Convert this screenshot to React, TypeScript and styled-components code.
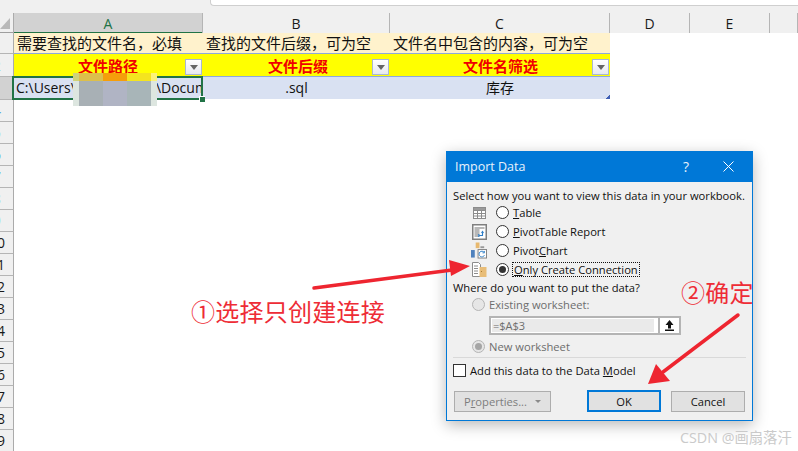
import React from "react";
import styled, { createGlobalStyle } from "styled-components";

const Global = createGlobalStyle`
  html, body { margin: 0; padding: 0; background: #fff; }
  * { box-sizing: border-box; }
`;
const CJK = `"Open Sans", "Noto Sans CJK SC", sans-serif`;
const columns = "14px 189px 187px 220px 80px 80px 28px";

const Page = styled.div`
  position: relative; width: 798px; height: 451px; overflow: hidden; background: #fff;
  font-family: ${CJK}; color: #111;
`;
const TopStrip = styled.div`height: 13px; background: #f0f0f0; padding-left: 210px;`;
const NameBox = styled.div`
  height: 6px; background: #fff; border: 1px solid #cfcfcf; border-top: 0; border-right: 0;
  border-bottom-left-radius: 4px;
`;
const HeaderRow = styled.div`
  display: grid; grid-template-columns: ${columns}; height: 20px; background: #f0f0f0;
  border-bottom: 1px solid #9e9e9e;
`;
const Corner = styled.div`
  position: relative; border-right: 1px solid #ababab;
  &::after {
    content: ""; position: absolute; left: 0; bottom: 4px; width: 0; height: 0;
    border-left: 10px solid transparent; border-bottom: 11px solid #b9b9b9;
  }
`;
const ColHead = styled.div<{ $active?: boolean }>`
  display: flex; align-items: center; justify-content: center; font-size: 14px; padding-top: 1px;
  background: ${p => (p.$active ? "#d2d2d2" : "#f0f0f0")};
  color: ${p => (p.$active ? "#217346" : "#1a1a1a")};
  border-right: 1px solid #b5b5b5;
  ${p => p.$active && "box-shadow: inset 0 -1px 0 #217346, 0 1px 0 #217346;"}
`;
const Body = styled.div`display: flex; height: 418px;`;
const Gutter = styled.div`display: flex; flex-direction: column; width: 14px; flex: none;`;
const RowHead = styled.div<{ $h: number; $active?: boolean; $pad: number; $tint?: string }>`
  height: ${p => p.$h}px; flex: none; overflow: hidden; display: flex; align-items: center;
  justify-content: flex-end; padding-right: ${p => p.$pad}px; font-size: 14px; white-space: nowrap;
  color: ${p => p.$tint || "#1a1a1a"};
  background: ${p => (p.$active ? "#d2d2d2" : "#f0f0f0")};
  border-right: 1px solid #ababab; border-bottom: 1px solid #b5b5b5;
`;
const Table = styled.div`
  display: grid; grid-template-columns: 189px 187px 220px; grid-template-rows: 21px 23px 22px;
  width: 596px; height: 66px;
`;
const NoteCell = styled.div`
  background: #fff2cc; font-size: 15px; line-height: 21px; padding-left: 3px; white-space: nowrap;
  border-bottom: 1px solid #8ea9db;
`;
const HeadCell = styled.div<{ $shift?: number }>`
  position: relative; background: #ffff00; color: #f00000; font-weight: 700; font-size: 15px;
  display: flex; align-items: center; justify-content: center;
  padding-left: ${p => p.$shift || 0}px; padding-right: 1px;
  border-bottom: 1px solid #8ea9db;
`;
const FilterBtn = styled.span`
  position: absolute; right: 1px; top: 5px; width: 17px; height: 16px;
  border: 1px solid #a9b7d1; background: linear-gradient(#fff, #e6e8ee);
  &::after {
    content: ""; position: absolute; left: 4px; top: 5px; width: 0; height: 0;
    border-left: 4px solid transparent; border-right: 4px solid transparent; border-top: 5px solid #666;
  }
`;
const DataCell = styled.div<{ $selected?: boolean; $resize?: boolean }>`
  position: relative; background: #d9e1f2; font-size: 14px; line-height: 22px; text-align: center;
  white-space: nowrap;
  ${p => p.$resize && `
    &::after { content: ""; position: absolute; right: 0; bottom: 0; width: 4px; height: 4px;
      background: linear-gradient(135deg, transparent 50%, #3f5fb5 50%); }
  `}
`;
const SelectedBox = styled.div`
  position: absolute; inset: -1px 0 -1px -2px; border: 2px solid #217346; overflow: hidden;
  text-align: left; padding-left: 2px; line-height: 20px; background: #d9e1f2;
`;
const FillHandle = styled.span`
  position: absolute; right: -2px; bottom: -3px; width: 6px; height: 6px; background: #217346;
  border: 1px solid #fff; border-right: 0; border-bottom: 0; z-index: 2;
`;
const Hidden = styled.span`display: inline-block; width: 80px;`;
const Mosaic = styled.div`
  position: absolute; left: 73px; top: 73px; width: 84px; height: 33px; display: grid;
  grid-template-columns: 6px 24px 24px 24px 6px; grid-template-rows: 8px 25px;
`;
const Tile = styled.div<{ $c: string }>`background: ${p => p.$c};`;

const Dialog = styled.div`
  position: absolute; left: 446px; top: 151px; width: 307px; height: 270px; background: #f0f0f0;
  border: 1px solid #0078d7; box-shadow: 0 4px 14px rgba(0,0,0,.28); display: flex; flex-direction: column;
  font-size: 11.2px; color: #111;
`;
const TitleBar = styled.div`
  height: 30px; flex: none; background: #0078d7; color: #e8f2fb; display: flex; align-items: center;
  padding: 0 18px 2px 8px; font-size: 12.5px;
`;
const Title = styled.span`flex: 1;`;
const Help = styled.span`margin-right: 34px; font-size: 14px;`;
const DlgBody = styled.div`display: flex; flex-direction: column; padding: 5px 6px 0 6px; flex: 1;`;
const Line = styled.div<{ $h?: number; $muted?: boolean; $indent?: number }>`
  height: ${p => p.$h || 19}px; display: flex; align-items: center; white-space: nowrap;
  padding-left: ${p => p.$indent || 0}px; color: ${p => (p.$muted ? "#6d6d6d" : "#111")};
`;
const IconSlot = styled.span`width: 16px; margin-left: 18px; margin-right: 9px; display: flex; justify-content: center; flex: none;`;
const Radio = styled.span<{ $on?: boolean; $muted?: boolean }>`
  width: 13px; height: 13px; border-radius: 50%; flex: none; position: relative; background: ${p => (p.$muted ? "#e6e6e6" : "#fff")};
  border: 1px solid ${p => (p.$muted ? "#b5b5b5" : "#333")};
  margin-right: 4px;
  ${p => p.$on && `&::after { content: ""; position: absolute; inset: 2px; border-radius: 50%; background: ${p.$muted ? "#a5a5a5" : "#333"}; }`}
`;
const Focus = styled.span`outline: 1px dotted #111; padding: 0 1px; line-height: 13px;`;
const Key = styled.span`text-decoration: underline; text-underline-offset: 1px;`;
const RefField = styled.div`
  margin: 3px 0 0 36px; width: 192px; height: 19px; flex: none; display: flex; border: 2px solid #b4b4b4; background: #fff;
`;
const RefInput = styled.div`
  flex: 1; margin: 1px 4px 1px 1px; background: #eaeaea; color: #6d6d6d; padding-left: 1px; line-height: 13px; font-size: 11px;
`;
const RefBtn = styled.div`width: 21px; border-left: 2px solid #b4b4b4; display: flex; align-items: center; justify-content: center;`;
const Sep = styled.div`height: 1px; flex: none; background: #d9d9d9; margin: 0 0 5px 0;`;
const Check = styled.span`width: 13px; height: 13px; background: #fff; border: 1px solid #333; margin-right: 4px; flex: none;`;
const Buttons = styled.div`display: flex; align-items: center; margin-top: 12px; padding-left: 1px;`;
const Btn = styled.div<{ $w: number; $primary?: boolean; $muted?: boolean }>`
  width: ${p => p.$w}px; height: ${p => (p.$primary ? 22 : 21)}px; display: flex; align-items: center; justify-content: center;
  background: #e1e1e1; border: ${p => (p.$primary ? "2px solid #0078d7" : "1px solid #adadad")};
  color: ${p => (p.$muted ? "#7d7d7d" : "#111")};
  gap: 8px;
`;
const DropCaret = styled.span`
  width: 0; height: 0; border-left: 3px solid transparent; border-right: 3px solid transparent; border-top: 3px solid #8a8a8a;
`;
const Spacer = styled.div<{ $w: number }>`width: ${p => p.$w}px; flex: none;`;

const Note1 = styled.div`
  position: absolute; left: 191px; top: 295px; font-size: 24px; line-height: 32px; color: #ee2c36;
  font-family: "Noto Sans CJK SC", sans-serif; white-space: nowrap; letter-spacing: .25px;
`;
const Note2 = styled(Note1)`left: 681px; top: 276px; width: 71px; overflow: hidden;`;
const Overlay = styled.svg`position: absolute; inset: 0; pointer-events: none;`;
const Watermark = styled.div`
  position: absolute; left: 680px; top: 429px; font-size: 14.3px; line-height: 18px; color: #cacaca;
  font-family: "Open Sans", "Noto Sans CJK SC", sans-serif; white-space: nowrap;
`;

const gutter: { h: number; t: string; pad: number; active?: boolean; tint?: string }[] = [
  { h: 21, t: "", pad: 0 },
  { h: 23, t: "2", pad: 12, tint: "#8fd8f0" },
  { h: 23, t: "", pad: 0, active: true },
  { h: 22, t: "4", pad: 12, tint: "#5aa8e0" },
  { h: 22, t: "5", pad: 12, tint: "#a0e0f0" },
  { h: 22, t: "6", pad: 12, tint: "#5aa8e0" },
  { h: 22, t: "7", pad: 12, tint: "#5aa8e0" },
  { h: 22, t: "8", pad: 12, tint: "#a0e0f0" },
  { h: 22, t: "9", pad: 12, tint: "#a0e8f0" },
  ...[10, 11, 12, 13, 14, 15, 16, 17, 18, 19].map(n => ({ h: 22, t: String(n), pad: 8 })),
];
const tiles = ["#cfd27a", "#dcbf4c", "#f59e0b", "#f4e41f", "#fbf27a", "#dde6e0", "#a8b0b5", "#b0b4c4", "#a8b5b8", "#dde6e0"];

const TableIcon = () => (
  <svg width="13" height="12" viewBox="0 0 13 12" fill="none" stroke="#8c8c8c">
    <rect x=".5" y=".5" width="12" height="11" fill="#fff" />
    <rect x=".5" y=".5" width="12" height="3" fill="#9a9a9a" />
    <path d="M4.5 3.5v8M8.5 3.5v8M.5 6.5h12M.5 9h12" />
  </svg>
);
const PivotIcon = () => (
  <svg width="15" height="16" viewBox="0 0 15 16" fill="none">
    <rect x=".75" y=".75" width="13.5" height="14.5" fill="#fff" stroke="#7f7f7f" strokeWidth="1.5" />
    <path d="M2.5 3h10v2h-5v8h-5z" fill="#b8b8b8" />
    <path d="M8 11.5h2.500V8M9.500 9l1-1.500L11.500 9M6 12.500l2-1-2-1" stroke="#2f7fc8" strokeWidth="1.1" />
  </svg>
);
const ChartIcon = () => (
  <svg width="17" height="17" viewBox="0 0 17 17" fill="none">
    <rect x="0" y="8" width="4" height="8" fill="#4f81bd" />
    <rect x="5" y="0" width="4" height="6" fill="#e8b96f" />
    <rect x="10" y="4" width="4" height="2" fill="#9a9a9a" />
    <rect x="7.500" y="7.500" width="9" height="9" fill="#fff" stroke="#7f7f7f" />
    <path d="M14 10.500a3 3 0 1 0 .3 3M14.200 9v2h-2" stroke="#2f7fc8" strokeWidth="1" />
  </svg>
);
const DocIcon = () => (
  <svg width="15" height="15" viewBox="0 0 15 15" fill="none">
    <path d="M.5.5h6l2 2v12H.5z" fill="#fff" stroke="#8c8c8c" />
    <path d="M2 4h4M2 6.500h4M2 9h4M2 11.500h4" stroke="#8c8c8c" />
    <rect x="7.500" y="5" width="7" height="10" fill="#e8bd78" />
    <rect x="9" y="9" width="1" height="1" fill="#a87a30" />
  </svg>
);

export default function App() {
  return (
    <Page>
      <Global />
      <TopStrip><NameBox /></TopStrip>
      <HeaderRow>
        <Corner />
        <ColHead $active>A</ColHead>
        <ColHead>B</ColHead>
        <ColHead>C</ColHead>
        <ColHead>D</ColHead>
        <ColHead>E</ColHead>
        <ColHead />
      </HeaderRow>
      <Body>
        <Gutter>
          {gutter.map((g, i) => (
            <RowHead key={i} $h={g.h} $pad={g.pad} $active={g.active} $tint={g.tint}>{g.t}</RowHead>
          ))}
        </Gutter>
        <Table>
          <NoteCell>需要查找的文件名，必填</NoteCell>
          <NoteCell>查找的文件后缀，可为空</NoteCell>
          <NoteCell>文件名中包含的内容，可为空</NoteCell>
          <HeadCell>文件路径<FilterBtn /></HeadCell>
          <HeadCell $shift={4}>文件后缀<FilterBtn /></HeadCell>
          <HeadCell $shift={2}>文件名筛选<FilterBtn /></HeadCell>
          <DataCell $selected>
            <SelectedBox>C:\Users\<Hidden />\Documents</SelectedBox>
            <FillHandle />
          </DataCell>
          <DataCell>.sql</DataCell>
          <DataCell $resize>库存</DataCell>
        </Table>
      </Body>
      <Mosaic>{tiles.map((c, i) => <Tile key={i} $c={c} />)}</Mosaic>

      <Dialog>
        <TitleBar>
          <Title>Import Data</Title>
          <Help>?</Help>
          <svg width="11" height="11" viewBox="0 0 11 11" stroke="#fff" strokeWidth="1"><path d="M.5.5l10 10M10.500.5l-10 10" /></svg>
        </TitleBar>
        <DlgBody>
          <Line $h={16}>Select how you want to view this data in your workbook.</Line>
          <Line><IconSlot><TableIcon /></IconSlot><Radio /><span><Key>T</Key>able</span></Line>
          <Line><IconSlot><PivotIcon /></IconSlot><Radio /><span><Key>P</Key>ivotTable Report</span></Line>
          <Line><IconSlot><ChartIcon /></IconSlot><Radio /><span>Pivot<Key>C</Key>hart</span></Line>
          <Line><IconSlot><DocIcon /></IconSlot><Radio $on /><Focus><Key>O</Key>nly Create Connection</Focus></Line>
          <Line $h={17}>Where do you want to put the data?</Line>
          <Line $h={17} $muted $indent={19}><Radio $muted />Existing worksheet:</Line>
          <RefField>
            <RefInput>=$A$3</RefInput>
            <RefBtn>
              <svg width="11" height="11" viewBox="0 0 11 11" fill="#111"><path d="M5.500 0l4 5H7v3.500H4V5H1.500zM1 9.500h9V11H1z" /></svg>
            </RefBtn>
          </RefField>
          <Line $h={22} $muted $indent={19}><Radio $on $muted />New worksheet</Line>
          <Sep />
          <Line $h={15}><Check /><span>Add this data to the Data <Key>M</Key>odel</span></Line>
          <Buttons>
            <Btn $w={97} $muted><span>P<Key>r</Key>operties...</span><DropCaret /></Btn>
            <Spacer $w={36} />
            <Btn $w={74} $primary>OK</Btn>
            <Spacer $w={10} />
            <Btn $w={74}>Cancel</Btn>
          </Buttons>
        </DlgBody>
      </Dialog>

      <Note1>①选择只创建连接</Note1>
      <Note2>②确定</Note2>
      <Overlay width="798" height="451" viewBox="0 0 798 451">
        <path d="M314 288L452 270" stroke="#ee2530" strokeWidth="3.5" strokeLinecap="round" />
        <path d="M470 266L449 260L451 276z" fill="#ee2530" />
        <path d="M738 315L663 372" stroke="#ee2530" strokeWidth="3.5" strokeLinecap="round" />
        <path d="M648 384L656 364L670 381z" fill="#ee2530" />
      </Overlay>
      <Watermark>CSDN @画扇落汗</Watermark>
    </Page>
  );
}
